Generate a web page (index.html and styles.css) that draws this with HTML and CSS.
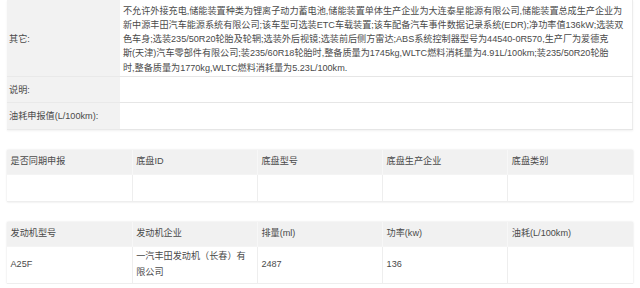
FILE: index.html
```html
<!DOCTYPE html>
<html lang="zh-CN">
<head>
<meta charset="utf-8">
<title>车辆参数</title>
<link rel="stylesheet" href="styles.css">
</head>
<body>
<div class="page">
  <table class="info">
    <tr class="first">
      <th>其它:</th>
      <td class="long">不允许外接充电,储能装置种类为锂离子动力蓄电池,储能装置单体生产企业为大连泰星能源有限公司,储能装置总成生产企业为<br>新中源丰田汽车能源系统有限公司;该车型可选装ETC车载装置;该车配备汽车事件数据记录系统(EDR);净功率值136kW;选装双<br>色车身;选装235/50R20轮胎及轮辋;选装外后视镜;选装前后侧方雷达;ABS系统控制器型号为44540-0R570,生产厂为爱德克<br>斯(天津)汽车零部件有限公司;装235/60R18轮胎时,整备质量为1745kg,WLTC燃料消耗量为4.91L/100km;装235/50R20轮胎<br>时,整备质量为1770kg,WLTC燃料消耗量为5.23L/100km.</td>
    </tr>
    <tr>
      <th>说明:</th>
      <td></td>
    </tr>
    <tr>
      <th>油耗申报值(L/100km):</th>
      <td></td>
    </tr>
  </table>

  <table class="grid">
    <thead>
      <tr><th>是否同期申报</th><th>底盘ID</th><th>底盘型号</th><th>底盘生产企业</th><th>底盘类别</th></tr>
    </thead>
    <tbody>
      <tr><td></td><td></td><td></td><td></td><td></td></tr>
    </tbody>
  </table>

  <table class="grid">
    <thead>
      <tr><th>发动机型号</th><th>发动机企业</th><th>排量(ml)</th><th>功率(kw)</th><th>油耗(L/100km)</th></tr>
    </thead>
    <tbody>
      <tr><td>A25F</td><td>一汽丰田发动机（长春）有限公司</td><td>2487</td><td>136</td><td></td></tr>
    </tbody>
  </table>
</div>
</body>
</html>
```
FILE: styles.css
```css
html, body {
  margin: 0;
  padding: 0;
  background: #ffffff;
}
body {
  font-family: "Liberation Sans", "Noto Sans CJK SC", sans-serif;
  font-size: 9.15px;
  color: #4a4a4a;
}
.page {
  padding: 0 7px;
  display: flex;
  flex-direction: column;
  gap: 20px;
}
table {
  width: 100%;
  border-collapse: collapse;
  table-layout: fixed;
}
.info {
  box-shadow: 0 1px 2px rgba(0, 0, 0, 0.06);
}
.info th {
  width: 109px;
  background: #f2f2f2;
  font-weight: normal;
  text-align: left;
  padding: 2px 2px;
  height: 21.5px;
  line-height: 14.3px;
  border-bottom: 1px solid #e9e9e9;
  white-space: nowrap;
}
.info td {
  padding: 2px 3px;
  height: 21.5px;
  line-height: 14.3px;
  border-bottom: 1px solid #e6e6e6;
  border-right: 1px solid #ececec;
}
.info .first th,
.info .first td {
  padding-top: 3.5px;
  padding-bottom: 1px;
}
.info td.long {
  white-space: nowrap;
  letter-spacing: -0.02px;
}
.grid {
  box-shadow: 0 0 2px rgba(0, 0, 0, 0.12);
}
.grid th {
  background: #f1f1f1;
  font-weight: normal;
  text-align: left;
  padding: 2px 3.5px;
  height: 20.5px;
  line-height: 15.6px;
  border-right: 1px solid #f7f7f7;
}
.grid td {
  padding: 2px 3.5px;
  height: 21.5px;
  line-height: 15.6px;
  border-right: 1px solid #eeeeee;
  border-top: 1px solid #f4f4f4;
  border-bottom: 1px solid #eeeeee;
}
.grid th:last-child,
.grid td:last-child {
  border-right: none;
}
```
